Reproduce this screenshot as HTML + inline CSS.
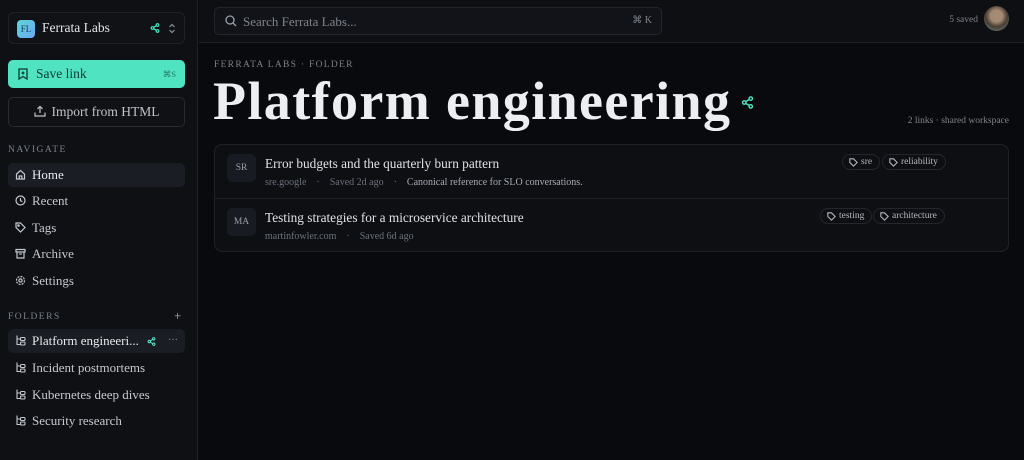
<!DOCTYPE html>
<html><head><meta charset="utf-8"><style>
*{box-sizing:border-box;margin:0;padding:0}
body{width:1024px;height:460px;overflow:hidden;background:#090a0d;font-family:"Liberation Serif","DejaVu Serif",serif;color:#d6d9de;position:relative}
.sb{position:absolute;left:0;top:0;width:198px;height:460px;background:#0e1014;border-right:1px solid #1e2228}
.ws{position:absolute;left:8px;top:12px;width:177px;height:32px;border:1px solid #1f2329;border-radius:6px;background:#101216}
.logo{position:absolute;left:8px;top:7px;width:18px;height:18px;border-radius:4px;background:linear-gradient(135deg,#5fd6d8,#6aa7f0);color:#1b3b5a;font-size:9px;line-height:18px;text-align:center}
.ws .n{position:absolute;left:33px;top:7px;font-size:13.5px;color:#e1e4e8}
.save{position:absolute;left:8px;top:60px;width:177px;height:28px;border-radius:5px;background:#4fe3c1;color:#0c3a30;font-size:13.5px}
.imp{position:absolute;left:8px;top:97px;width:177px;height:30px;border-radius:5px;border:1px solid #262a31;background:#0f1115;color:#bfc3c9;font-size:13.5px;text-align:center;line-height:28px}
.lab{position:absolute;left:8px;font-size:9.5px;letter-spacing:1.5px;color:#7b8088}
.it{position:absolute;left:8px;width:177px;height:24px;border-radius:5px;font-size:13px;color:#c5c9cf;line-height:24px;padding-left:24px}
.it.a{background:#1a1d23;color:#e8eaed}
.it svg{position:absolute;left:7px;top:6px}
.top{position:absolute;left:199px;top:0;right:0;height:43px;border-bottom:1px solid #1c2026;background:#0d0f12}
.srch{position:absolute;left:15px;top:7px;width:448px;height:28px;border:1px solid #22262c;border-radius:5px;background:#111318}
.srch span{position:absolute;left:28px;top:6px;font-size:13px;color:#7f848c}
.srch .k{left:auto;right:9px;top:7px;font-size:10px;color:#7f848c}
.av{position:absolute;right:15px;top:6px;width:25px;height:25px;border-radius:50%;background:radial-gradient(circle at 50% 40%,#a58a74 0 30%,#4a3d33 55%,#6e8a90 100%)}
.card{position:absolute;left:214px;top:144px;width:795px;height:108px;border:1px solid #1e2227;border-radius:8px;background:#0d0f13}
.row{position:absolute;left:0;width:100%;height:54px}
.ini{position:absolute;left:12px;top:9px;width:29px;height:28px;border-radius:5px;background:#181b21;color:#9aa0a8;font-size:9.5px;text-align:center;line-height:28px}
.tt{position:absolute;left:50px;top:11px;font-size:13.3px;color:#dfe2e6}
.mt{position:absolute;left:50px;top:32px;font-size:10px;color:#6c717a;white-space:pre}
.mt b{font-weight:normal;color:#a7acb3}
.tag{position:absolute;top:9px;height:16px;border:1px solid #23272d;border-radius:8px;font-size:9.5px;color:#b5b9bf;line-height:14px;padding:0 7px 0 18px}
.tag svg{position:absolute;left:6px;top:3px}
</style></head><body>
<div class="sb">
 <div class="ws"><div class="logo">FL</div><div class="n">Ferrata Labs</div>
  <svg style="position:absolute;left:141px;top:10px" width="10" height="10" viewBox="0 0 10 10" fill="none" stroke="#4fe3c1" stroke-width="1.2"><circle cx="7.5" cy="2" r="1.3"/><circle cx="2.5" cy="5" r="1.3"/><circle cx="7.5" cy="8" r="1.3"/><path d="M3.6 4.3 6.4 2.7M3.6 5.7 6.4 7.3"/></svg>
  <svg style="position:absolute;left:159px;top:10px" width="8" height="11" viewBox="0 0 8 11" fill="none" stroke="#8a8f97" stroke-width="1.2"><path d="M1.5 4 4 1.5 6.5 4M1.5 7 4 9.5 6.5 7"/></svg>
 </div>
 <div class="save"><svg style="position:absolute;left:10px;top:8px" width="10" height="12" viewBox="0 0 10 12" fill="none" stroke="#0c3a30" stroke-width="1.3"><path d="M1 1h8v10L5 8.5 1 11z M5 3.5v3M3.5 5h3"/></svg><span style="position:absolute;left:28px;top:6px">Save link</span><span style="position:absolute;right:9px;top:9px;font-size:8.5px;color:#2a7a66">⌘S</span></div>
 <div class="imp"><svg style="position:relative;top:1px;margin-right:6px" width="12" height="12" viewBox="0 0 12 12" fill="none" stroke="#bfc3c9" stroke-width="1.2"><path d="M6 8V1.5M3.5 4 6 1.5 8.5 4M1 7.5V11h10V7.5"/></svg>Import from HTML</div>
 <div class="lab" style="top:145px">NAVIGATE</div>
 <div class="it a" style="top:163px"><svg width="11" height="11" viewBox="0 0 11 11" fill="none" stroke="#c5c9cf" stroke-width="1.2"><path d="M1.5 5 5.5 1.5 9.5 5V10h-8z M4.2 10V7h2.6v3"/></svg>Home</div>
 <div class="it" style="top:189px"><svg width="11" height="11" viewBox="0 0 11 11" fill="none" stroke="#c5c9cf" stroke-width="1.2"><circle cx="5.5" cy="5.5" r="4.5"/><path d="M5.5 3v2.7l1.8 1"/></svg>Recent</div>
 <div class="it" style="top:216px"><svg width="11" height="11" viewBox="0 0 11 11" fill="none" stroke="#c5c9cf" stroke-width="1.2"><path d="M1 1h4.5l4.5 4.5-4.5 4.5L1 5.5z"/><circle cx="3.5" cy="3.5" r=".7"/></svg>Tags</div>
 <div class="it" style="top:242px"><svg width="11" height="11" viewBox="0 0 11 11" fill="none" stroke="#c5c9cf" stroke-width="1.2"><path d="M1 1.5h9v2.5H1zM2 4v6h7V4M4.2 6h2.6"/></svg>Archive</div>
 <div class="it" style="top:269px"><svg width="11" height="11" viewBox="0 0 11 11" fill="none" stroke="#c5c9cf" stroke-width="1.2"><circle cx="5.5" cy="5.5" r="1.6"/><circle cx="5.5" cy="5.5" r="4" stroke-dasharray="2 1.1"/></svg>Settings</div>
 <div class="lab" style="top:312px">FOLDERS</div>
 <div style="position:absolute;left:174px;top:308px;font-size:13px;color:#aeb2b8">+</div>
 <div class="it a" style="top:329px"><svg width="11" height="11" viewBox="0 0 11 11" fill="none" stroke="#c5c9cf" stroke-width="1.1"><path d="M2 0.5v9h3M2 4h3"/><rect x="5.5" y="2.5" width="4.5" height="3" rx="1"/><rect x="5.5" y="7" width="4.5" height="3" rx="1"/></svg>Platform engineeri...
  <svg style="position:absolute;left:139px;top:8px" width="9" height="9" viewBox="0 0 10 10" fill="none" stroke="#4fe3c1" stroke-width="1.2"><circle cx="7.5" cy="2" r="1.3"/><circle cx="2.5" cy="5" r="1.3"/><circle cx="7.5" cy="8" r="1.3"/><path d="M3.6 4.3 6.4 2.7M3.6 5.7 6.4 7.3"/></svg>
  <span style="position:absolute;left:160px;top:0px;font-size:10px;color:#8a8f97">···</span></div>
 <div class="it" style="top:356px"><svg width="11" height="11" viewBox="0 0 11 11" fill="none" stroke="#c5c9cf" stroke-width="1.1"><path d="M2 0.5v9h3M2 4h3"/><rect x="5.5" y="2.5" width="4.5" height="3" rx="1"/><rect x="5.5" y="7" width="4.5" height="3" rx="1"/></svg>Incident postmortems</div>
 <div class="it" style="top:383px"><svg width="11" height="11" viewBox="0 0 11 11" fill="none" stroke="#c5c9cf" stroke-width="1.1"><path d="M2 0.5v9h3M2 4h3"/><rect x="5.5" y="2.5" width="4.5" height="3" rx="1"/><rect x="5.5" y="7" width="4.5" height="3" rx="1"/></svg>Kubernetes deep dives</div>
 <div class="it" style="top:409px"><svg width="11" height="11" viewBox="0 0 11 11" fill="none" stroke="#c5c9cf" stroke-width="1.1"><path d="M2 0.5v9h3M2 4h3"/><rect x="5.5" y="2.5" width="4.5" height="3" rx="1"/><rect x="5.5" y="7" width="4.5" height="3" rx="1"/></svg>Security research</div>
</div>
<div class="top">
 <div class="srch"><svg style="position:absolute;left:10px;top:7px" width="12" height="12" viewBox="0 0 12 12" fill="none" stroke="#9aa0a8" stroke-width="1.3"><circle cx="5" cy="5" r="4"/><path d="M8 8l3 3"/></svg><span>Search Ferrata Labs...</span><span class="k">⌘ K</span></div>
 <div style="position:absolute;right:46px;top:15px;font-size:9.5px;color:#7f848c">5 saved</div>
 <div class="av"></div>
</div>
<div style="position:absolute;left:214px;top:60px;font-size:9.5px;letter-spacing:1.3px;color:#7b8088">FERRATA LABS · FOLDER</div>
<div style="position:absolute;left:213px;top:70px;font-size:54px;font-weight:bold;color:#eceef1;letter-spacing:1.4px;white-space:nowrap">Platform engineering</div>
<svg style="position:absolute;left:741px;top:96px" width="13" height="13" viewBox="0 0 10 10" fill="none" stroke="#4fe3c1" stroke-width="1.1"><circle cx="7.5" cy="2" r="1.3"/><circle cx="2.5" cy="5" r="1.3"/><circle cx="7.5" cy="8" r="1.3"/><path d="M3.6 4.3 6.4 2.7M3.6 5.7 6.4 7.3"/></svg>
<div style="position:absolute;right:15px;top:116px;font-size:9.5px;color:#7f848c">2 links · shared workspace</div>
<div class="card">
 <div class="row" style="top:0;border-bottom:1px solid #1c2025"><div class="ini">SR</div><div class="tt">Error budgets and the quarterly burn pattern</div><div class="mt">sre.google    ·    Saved 2d ago    ·    <b>Canonical reference for SLO conversations.</b></div>
  <div class="tag" style="left:627px"><svg width="9" height="9" viewBox="0 0 11 11" fill="none" stroke="#b5b9bf" stroke-width="1.3"><path d="M1 1h4.5l4.5 4.5-4.5 4.5L1 5.5z"/></svg>sre</div>
  <div class="tag" style="left:667px"><svg width="9" height="9" viewBox="0 0 11 11" fill="none" stroke="#b5b9bf" stroke-width="1.3"><path d="M1 1h4.5l4.5 4.5-4.5 4.5L1 5.5z"/></svg>reliability</div></div>
 <div class="row" style="top:54px"><div class="ini">MA</div><div class="tt">Testing strategies for a microservice architecture</div><div class="mt">martinfowler.com    ·    Saved 6d ago</div>
  <div class="tag" style="left:605px"><svg width="9" height="9" viewBox="0 0 11 11" fill="none" stroke="#b5b9bf" stroke-width="1.3"><path d="M1 1h4.5l4.5 4.5-4.5 4.5L1 5.5z"/></svg>testing</div>
  <div class="tag" style="left:658px"><svg width="9" height="9" viewBox="0 0 11 11" fill="none" stroke="#b5b9bf" stroke-width="1.3"><path d="M1 1h4.5l4.5 4.5-4.5 4.5L1 5.5z"/></svg>architecture</div></div>
</div>
</body></html>
